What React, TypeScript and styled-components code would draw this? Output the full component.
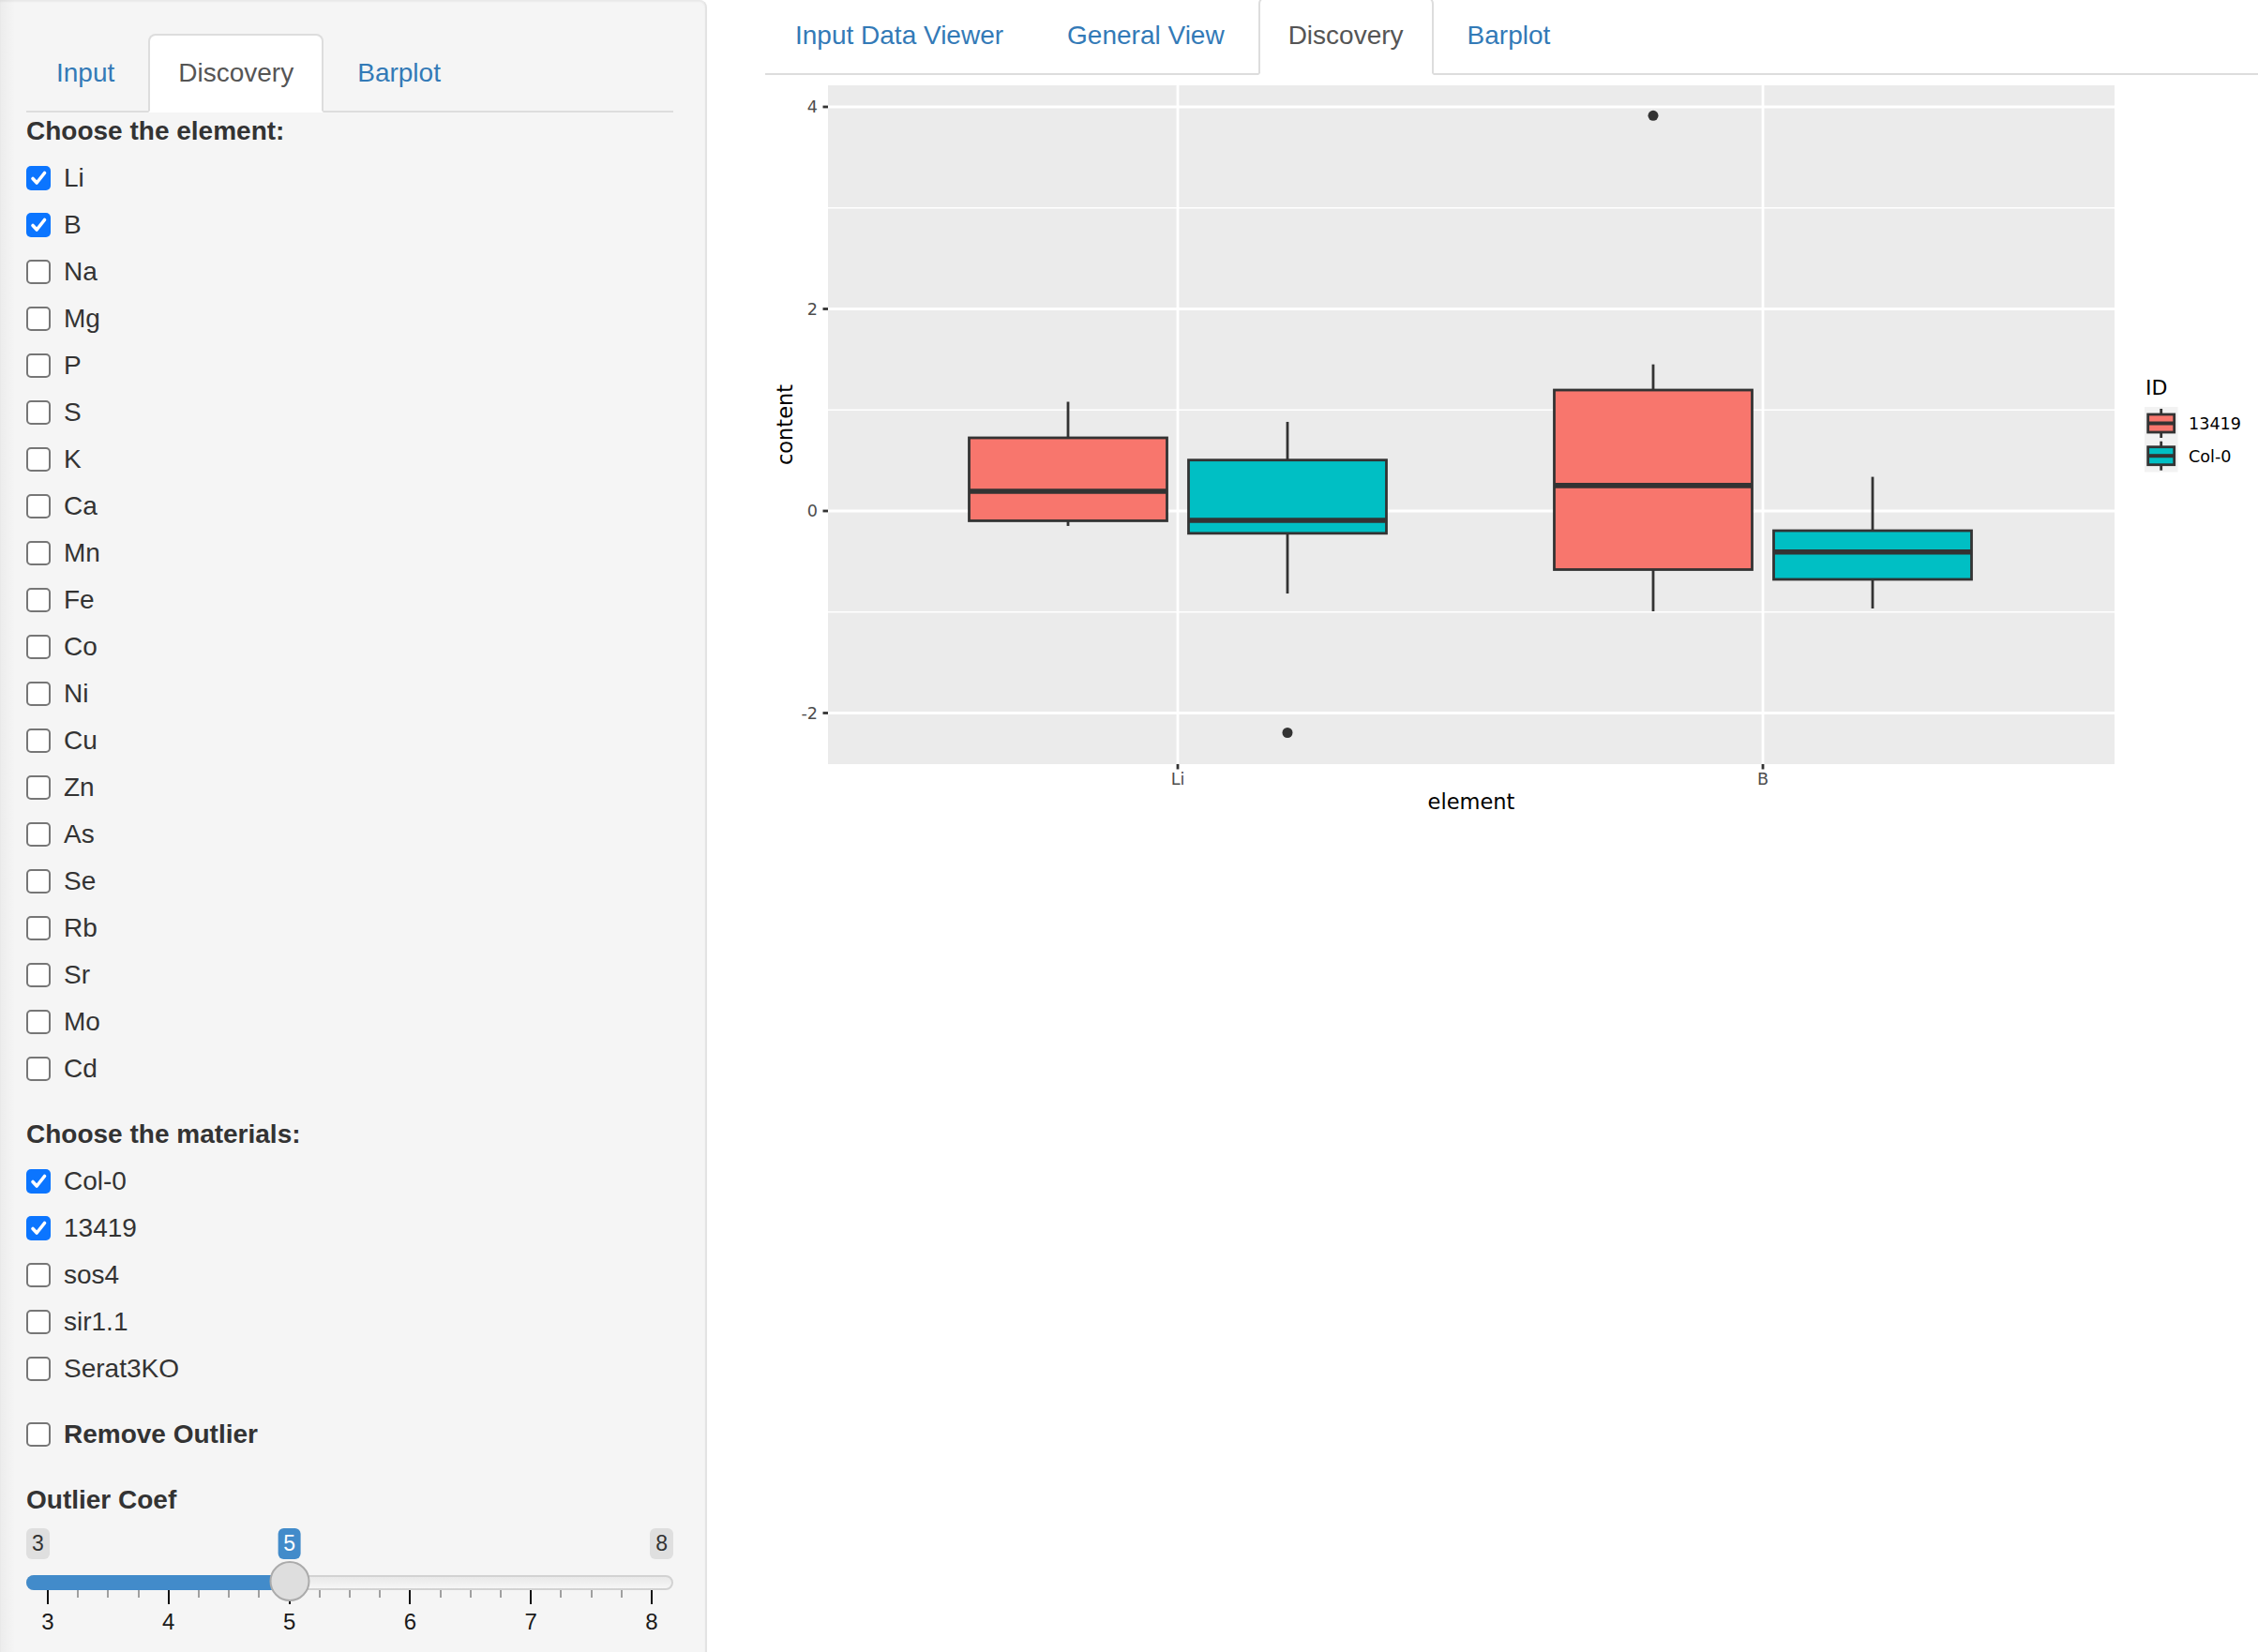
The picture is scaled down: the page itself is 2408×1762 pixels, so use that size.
import React from "react";
import styled, { createGlobalStyle } from "styled-components";

const GlobalStyle = createGlobalStyle`
  html, body { margin: 0; padding: 0; background: #fff; }
  body {
    font-family: "Liberation Sans", Arial, Helvetica, sans-serif;
    color: #333;
    font-size: 28px;
    line-height: 40px;
  }
  * { box-sizing: border-box; }
`;

const Page = styled.div`
  display: flex;
  width: 2408px;
  height: 1762px;
  overflow: hidden;
`;

const Sidebar = styled.aside`
  flex: 0 0 754px;
  height: 100%;
  padding: 36px 34px 0 28px;
  background: linear-gradient(to right, #ececec 0, #f5f5f5 16px);
  border-right: 2px solid #e3e3e3;
  border-top-right-radius: 8px;
  box-shadow: inset 0 2px 2px rgba(0, 0, 0, 0.05);
`;

const Main = styled.main`
  flex: 1;
  min-width: 0;
  padding-left: 62px;
  margin-top: -4px;
`;

const TabNav = styled.ul`
  display: flex;
  list-style: none;
  margin: 0;
  padding: 0;
  border-bottom: 2px solid #ddd;
`;

const Tab = styled.li<{ $active?: boolean }>`
  margin: 0 4px -2px 0;
  padding: 20px 30px;
  font-size: 28px;
  line-height: 40px;
  white-space: nowrap;
  border: 2px solid ${(p) => (p.$active ? "#ddd" : "transparent")};
  border-bottom-color: transparent;
  border-radius: 8px 8px 0 0;
  background: ${(p) => (p.$active ? "#fff" : "transparent")};
  color: ${(p) => (p.$active ? "#555" : "#337ab7")};
`;

const FormGroup = styled.div`
  margin-bottom: 30px;
`;

const ControlLabel = styled.div`
  font-weight: bold;
  line-height: 40px;
  margin-bottom: 10px;
`;

const Options = styled.div`
  display: flex;
  flex-direction: column;
  gap: 10px;
`;

const CheckRow = styled.label<{ $bold?: boolean }>`
  display: flex;
  align-items: center;
  gap: 14px;
  height: 40px;
  font-weight: ${(p) => (p.$bold ? "bold" : "normal")};
`;

const Box = styled.span<{ $checked?: boolean }>`
  flex: 0 0 26px;
  width: 26px;
  height: 26px;
  border-radius: 5px;
  display: flex;
  align-items: center;
  justify-content: center;
  background: ${(p) => (p.$checked ? "#0b75ff" : "#fff")};
  border: ${(p) => (p.$checked ? "none" : "2px solid #767676")};
`;

const CheckBox: React.FC<{ label: string; checked?: boolean; bold?: boolean }> = ({ label, checked, bold }) => (
  <CheckRow $bold={bold}>
    <Box $checked={checked}>
      {checked && (
        <svg width="26" height="26" viewBox="0 0 26 26">
          <path d="M7 13.5 L11.2 18 L19.5 7.5" fill="none" stroke="#fff" strokeWidth="3.6" strokeLinecap="round" strokeLinejoin="round" />
        </svg>
      )}
    </Box>
    <span>{label}</span>
  </CheckRow>
);

/* ---------- slider ---------- */
const SliderWrap = styled.div`
  position: relative;
  height: 124px;
`;

const Track = styled.div`
  position: absolute;
  left: 0;
  right: 0;
  top: 50px;
  height: 16px;
  border-radius: 8px;
  background: linear-gradient(#e9e9e9, #f6f6f6);
  border: 2px solid #d2d2d2;
`;

const Bar = styled.div`
  position: absolute;
  left: 0;
  top: 50px;
  height: 16px;
  border-radius: 8px 0 0 8px;
  background: #428bca;
`;

const EdgeLabel = styled.div<{ $right?: boolean }>`
  position: absolute;
  top: 0;
  ${(p) => (p.$right ? "right: 0;" : "left: 0;")}
  height: 33px;
  padding: 0 6px;
  border-radius: 6px;
  background: #dfdfdf;
  color: #333;
  font-size: 23px;
  line-height: 33px;
`;

const Scale = styled.div`
  position: absolute;
  left: 23px;
  right: 23px;
  top: 0;
  bottom: 0;
`;

const ValueLabel = styled.div`
  position: absolute;
  top: 0;
  transform: translateX(-50%);
  height: 33px;
  padding: 0 6px;
  border-radius: 6px;
  background: #428bca;
  color: #fff;
  font-size: 23px;
  line-height: 33px;
`;

const Thumb = styled.div`
  position: absolute;
  top: 35px;
  width: 43px;
  height: 43px;
  transform: translateX(-50%);
  border-radius: 50%;
  background: #dedede;
  border: 2px solid #ababab;
  z-index: 2;
`;

const Tick = styled.div<{ $major?: boolean }>`
  position: absolute;
  top: 66px;
  width: 2px;
  margin-left: -1px;
  height: ${(p) => (p.$major ? "15px" : "8px")};
  background: ${(p) => (p.$major ? "#111" : "#a0a0a0")};
`;

const TickLabel = styled.div`
  position: absolute;
  top: 86px;
  transform: translateX(-50%);
  font-size: 24px;
  line-height: 28px;
  color: #1a1a1a;
`;

const Slider: React.FC<{ min: number; max: number; value: number }> = ({ min, max, value }) => {
  const pct = (v: number) => ((v - min) / (max - min)) * 100;
  const frac = (value - min) / (max - min);
  const ticks: { v: number; major: boolean }[] = [];
  for (let i = 0; i <= (max - min) * 4; i++) {
    ticks.push({ v: min + i / 4, major: i % 4 === 0 });
  }
  return (
    <SliderWrap>
      <EdgeLabel>{min}</EdgeLabel>
      <EdgeLabel $right>{max}</EdgeLabel>
      <Track />
      <Bar style={{ width: `calc(23px + ${frac} * (100% - 46px))` }} />
      <Scale>
        <ValueLabel style={{ left: `${pct(value)}%` }}>{value}</ValueLabel>
        {ticks.map((t) => (
          <Tick key={t.v} $major={t.major} style={{ left: `${pct(t.v)}%` }} />
        ))}
        {ticks
          .filter((t) => t.major)
          .map((t) => (
            <TickLabel key={"l" + t.v} style={{ left: `${pct(t.v)}%` }}>
              {t.v}
            </TickLabel>
          ))}
        <Thumb style={{ left: `${pct(value)}%` }} />
      </Scale>
    </SliderWrap>
  );
};

/* ---------- plot ---------- */
const PlotFrame = styled.div`
  width: 1592px;
  height: 800px;
`;

const RED = "#F8766D";
const CYAN = "#00BFC4";
const yPx = (v: number) => 545 - 107.75 * v;

type BoxStat = { x: number; fill: string; wt: number; bt: number; med: number; bb: number; wb: number; out?: number[] };

const boxes: BoxStat[] = [
  { x: 1256 - 117, fill: RED, wt: 1.081, bt: 0.724, med: 0.195, bb: -0.097, wb: -0.148 },
  { x: 1256 + 117, fill: CYAN, wt: 0.882, bt: 0.504, med: -0.093, bb: -0.221, wb: -0.817, out: [-2.195] },
  { x: 1880 - 117, fill: RED, wt: 1.451, bt: 1.197, med: 0.251, bb: -0.58, wb: -0.993, out: [3.913] },
  { x: 1880 + 117, fill: CYAN, wt: 0.338, bt: -0.195, med: -0.406, bb: -0.677, wb: -0.965 },
];

const PX0 = 883;
const PX1 = 2255;
const PY0 = 91;
const PY1 = 815;
const HALF = 105.5;
const AXIS_FONT = "'DejaVu Sans', Verdana, sans-serif";

const LegendKey: React.FC<{ y: number; fill: string }> = ({ y, fill }) => {
  const cx = 2304.7;
  return (
    <g>
      <line x1={cx} x2={cx} y1={y + 2} y2={y + 8} stroke="#333" strokeWidth="2.8" />
      <line x1={cx} x2={cx} y1={y + 27} y2={y + 33} stroke="#333" strokeWidth="2.8" />
      <rect x={2290.7} y={y + 8} width={28} height={19} fill={fill} stroke="#333" strokeWidth="2.8" />
      <line x1={2290.7} x2={2318.7} y1={y + 17.5} y2={y + 17.5} stroke="#333" strokeWidth="4" />
    </g>
  );
};

const BoxPlot: React.FC = () => (
  <PlotFrame>
    <svg width="1592" height="800" viewBox="816 80 1592 800">
      <rect x={PX0} y={PY0} width={PX1 - PX0} height={PY1 - PY0} fill="#EBEBEB" />
      {[3, 1, -1].map((v) => (
        <line key={"mi" + v} x1={PX0} x2={PX1} y1={yPx(v)} y2={yPx(v)} stroke="#fff" strokeWidth="1.4" />
      ))}
      {[4, 2, 0, -2].map((v) => (
        <line key={"ma" + v} x1={PX0} x2={PX1} y1={yPx(v)} y2={yPx(v)} stroke="#fff" strokeWidth="2.8" />
      ))}
      {[1256, 1880].map((x) => (
        <line key={"vx" + x} x1={x} x2={x} y1={PY0} y2={PY1} stroke="#fff" strokeWidth="2.8" />
      ))}
      {boxes.map((b, i) => (
        <g key={i}>
          <line x1={b.x} x2={b.x} y1={yPx(b.wt)} y2={yPx(b.bt)} stroke="#333" strokeWidth="2.8" />
          <line x1={b.x} x2={b.x} y1={yPx(b.bb)} y2={yPx(b.wb)} stroke="#333" strokeWidth="2.8" />
          <rect
            x={b.x - HALF}
            y={yPx(b.bt)}
            width={HALF * 2}
            height={yPx(b.bb) - yPx(b.bt)}
            fill={b.fill}
            stroke="#333"
            strokeWidth="2.8"
          />
          <line x1={b.x - HALF} x2={b.x + HALF} y1={yPx(b.med)} y2={yPx(b.med)} stroke="#333" strokeWidth="5.7" />
          {(b.out || []).map((o) => (
            <circle key={o} cx={b.x} cy={yPx(o)} r="5.5" fill="#333" />
          ))}
        </g>
      ))}
      {/* y axis */}
      {[4, 2, 0, -2].map((v) => (
        <g key={"yt" + v}>
          <line x1={877.5} x2={PX0} y1={yPx(v)} y2={yPx(v)} stroke="#333" strokeWidth="2.8" />
          <text x={872} y={yPx(v)} dy="0.35em" textAnchor="end" fontFamily={AXIS_FONT} fontSize="17.6" fill="#4D4D4D">
            {v}
          </text>
        </g>
      ))}
      {/* x axis */}
      {[
        { x: 1256, l: "Li" },
        { x: 1880, l: "B" },
      ].map((t) => (
        <g key={"xt" + t.l}>
          <line x1={t.x} x2={t.x} y1={PY1} y2={PY1 + 5.5} stroke="#333" strokeWidth="2.8" />
          <text x={t.x} y={831} dy="0.35em" textAnchor="middle" fontFamily={AXIS_FONT} fontSize="17.6" fill="#4D4D4D">
            {t.l}
          </text>
        </g>
      ))}
      <text x={1569} y={855} dy="0.35em" textAnchor="middle" fontFamily={AXIS_FONT} fontSize="22.5" fill="#000">
        element
      </text>
      <text
        x={0}
        y={0}
        dy="0.35em"
        textAnchor="middle"
        fontFamily={AXIS_FONT}
        fontSize="22.5"
        fill="#000"
        transform="translate(837 453) rotate(-90)"
      >
        content
      </text>
      {/* legend */}
      <text x={2288} y={413} dy="0.35em" fontFamily={AXIS_FONT} fontSize="22" fill="#000">
        ID
      </text>
      <rect x={2287} y={434} width={35.5} height={69.5} fill="#F2F2F2" />
      <LegendKey y={434} fill={RED} />
      <LegendKey y={468.7} fill={CYAN} />
      <text x={2334} y={452} dy="0.35em" fontFamily={AXIS_FONT} fontSize="17.6" fill="#000">
        13419
      </text>
      <text x={2334} y={486.7} dy="0.35em" fontFamily={AXIS_FONT} fontSize="17.6" fill="#000">
        Col-0
      </text>
    </svg>
  </PlotFrame>
);

const elements = ["Li", "B", "Na", "Mg", "P", "S", "K", "Ca", "Mn", "Fe", "Co", "Ni", "Cu", "Zn", "As", "Se", "Rb", "Sr", "Mo", "Cd"];
const checkedElements = new Set(["Li", "B"]);
const materials = ["Col-0", "13419", "sos4", "sir1.1", "Serat3KO"];
const checkedMaterials = new Set(["Col-0", "13419"]);

export default function App() {
  return (
    <>
      <GlobalStyle />
      <Page>
        <Sidebar>
          <TabNav>
            <Tab>Input</Tab>
            <Tab $active>Discovery</Tab>
            <Tab>Barplot</Tab>
          </TabNav>
          <FormGroup>
            <ControlLabel>Choose the element:</ControlLabel>
            <Options>
              {elements.map((e) => (
                <CheckBox key={e} label={e} checked={checkedElements.has(e)} />
              ))}
            </Options>
          </FormGroup>
          <FormGroup>
            <ControlLabel>Choose the materials:</ControlLabel>
            <Options>
              {materials.map((m) => (
                <CheckBox key={m} label={m} checked={checkedMaterials.has(m)} />
              ))}
            </Options>
          </FormGroup>
          <FormGroup>
            <CheckBox label="Remove Outlier" bold />
          </FormGroup>
          <FormGroup>
            <ControlLabel>Outlier Coef</ControlLabel>
            <Slider min={3} max={8} value={5} />
          </FormGroup>
        </Sidebar>
        <Main>
          <TabNav>
            <Tab>Input Data Viewer</Tab>
            <Tab>General View</Tab>
            <Tab $active>Discovery</Tab>
            <Tab>Barplot</Tab>
          </TabNav>
          <BoxPlot />
        </Main>
      </Page>
    </>
  );
}
